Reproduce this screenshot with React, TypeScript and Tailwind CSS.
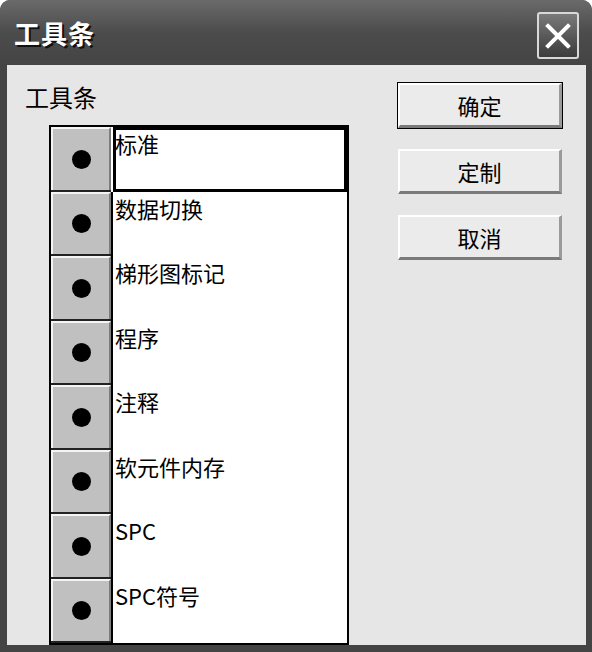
const items = ["标准", "数据切换", "梯形图标记", "程序", "注释", "软元件内存", "SPC", "SPC符号"];

const font = { fontFamily: '"Noto Sans CJK SC", "Noto Sans", sans-serif' };

function DialogButton({ label, primary }: { label: string; primary?: boolean }) {
  return (
    <div className={primary ? "border border-black" : "border border-transparent"}>
      <div className="h-[45px] w-[164px] bg-[#ebebeb] border-t-2 border-l-2 border-t-white border-l-white border-b-[3px] border-r-[3px] border-b-[#7a7a7a] border-r-[#9a9a9a] flex items-center justify-center text-[22px] text-black">
        {label}
      </div>
    </div>
  );
}

export default function App() {
  return (
    <div className="w-[592px] h-[652px] bg-[#444] rounded-t-[10px] overflow-hidden flex flex-col" style={font}>
      <div className="h-[65px] shrink-0 bg-gradient-to-b from-[#6a6a6a] via-[#4c4c4c] to-[#444] flex items-center justify-between pl-[14px] pr-[13px]">
        <span className="text-white text-[26px] font-bold tracking-[1px] [text-shadow:2px_2px_0_#111]">工具条</span>
        <div className="w-[42px] h-[47px] mt-[6px] border-2 border-[#d8d8d8] rounded-[3px] bg-gradient-to-b from-[#7a7a7a] to-[#3c3c3c] flex items-center justify-center">
          <svg width="28" height="28" viewBox="0 0 28 28">
            <path d="M4 4 L24 24 M24 4 L4 24" stroke="#fff" strokeWidth="4" strokeLinecap="square" />
          </svg>
        </div>
      </div>

      <div className="flex-1 ml-[7px] mr-[6px] mb-[7px] bg-[#e6e6e6] flex">
        <div className="w-[342px] flex flex-col pt-[16px]">
          <div className="ml-[18px] h-[32px] text-[24px] leading-[32px] text-black">工具条</div>
          <div className="ml-[42px] mt-[12px] w-[300px] flex-1 bg-white border-2 border-black flex flex-col">
            {items.map((name, i) => (
              <div key={name} className="h-[64.5px] flex shrink-0">
                <div className="w-[60px] border-b-2 border-[#222] flex">
                  <div className="flex-1 bg-[#c0c0c0] border-t-2 border-l-2 border-t-[#f4f4f4] border-l-[#f4f4f4] border-r-2 border-r-[#7c7c7c] flex items-center justify-center">
                    <div className="w-[19px] h-[19px] rounded-full bg-black" />
                  </div>
                </div>
                <div className={"flex-1 pl-[2px] text-[22px] leading-[32px] text-black " + (i === 0 ? "shadow-[inset_0_0_0_3px_#000] border-l-2 border-white" : "border-l-2 border-black")}>
                  {name}
                </div>
              </div>
            ))}
          </div>
        </div>
        <div className="flex flex-col gap-[19px] pt-[17px] ml-[48px]">
          <DialogButton label="确定" primary />
          <DialogButton label="定制" />
          <DialogButton label="取消" />
        </div>
      </div>
    </div>
  );
}
